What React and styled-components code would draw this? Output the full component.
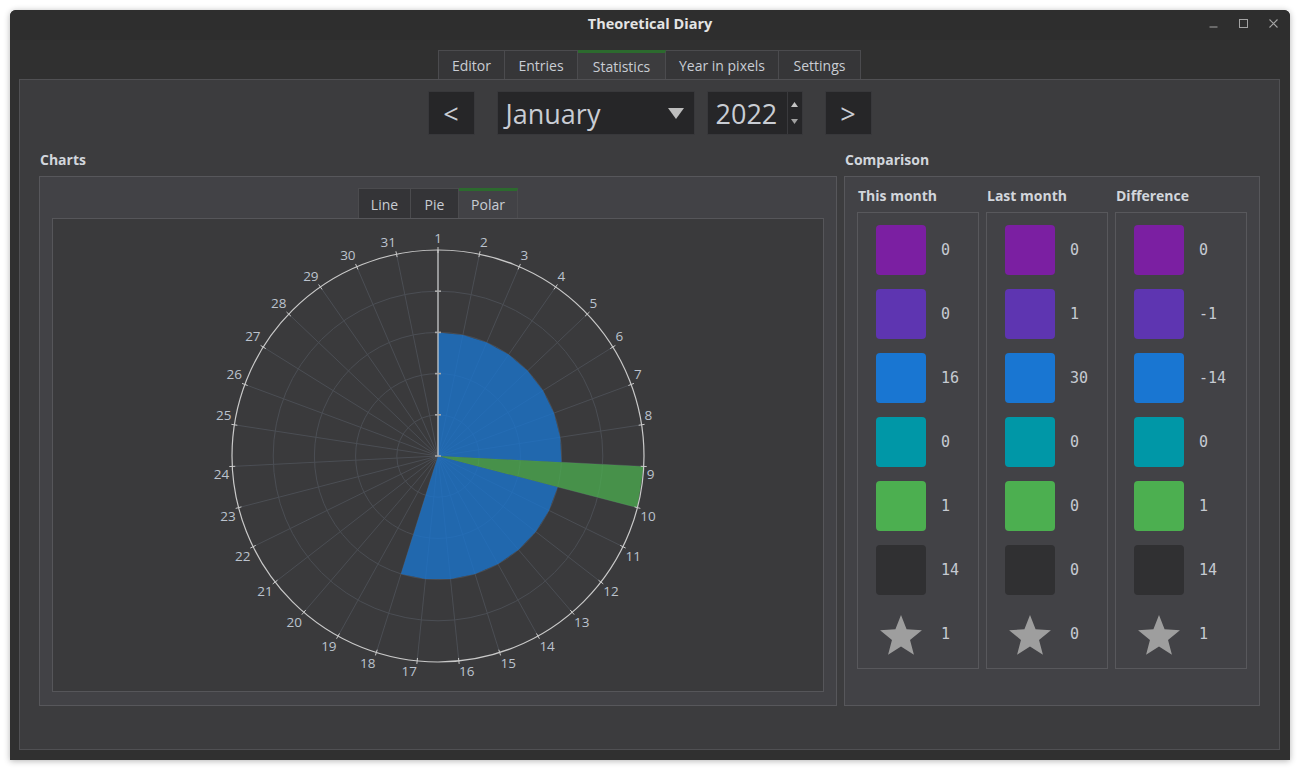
import React from 'react';
import styled, { createGlobalStyle } from 'styled-components';

const UI = `"Open Sans", "Noto Sans", sans-serif`;
const MONO = `"DejaVu Sans Mono", "Liberation Mono", monospace`;
const TEXT = '#c9cdd4';

const GlobalStyle = createGlobalStyle`
  html, body { margin: 0; padding: 0; background: #ffffff; }
  body { font-family: ${UI}; }
  * { box-sizing: border-box; }
`;

const Screen = styled.div`
  width: 1300px;
  height: 771px;
  padding: 10px 10px 11px 10px;
  background: #ffffff;
`;

const Window = styled.div`
  width: 1280px;
  height: 750px;
  background: #303030;
  border-radius: 6px 6px 0 0;
  box-shadow: 0 1px 6px rgba(0, 0, 0, 0.3);
  display: flex;
  flex-direction: column;
  overflow: hidden;
`;

const TitleBar = styled.div`
  height: 30px;
  flex-shrink: 0;
  display: grid;
  grid-template-columns: 1fr auto 1fr;
  align-items: center;
  padding-bottom: 3px;
  background: #2e2e2e;
`;

const Title = styled.div`
  grid-column: 2;
  font-weight: 700;
  font-size: 14.5px;
  color: #e4e4e4;
`;

const Controls = styled.div`
  grid-column: 3;
  justify-self: end;
  display: flex;
  gap: 21px;
  padding-right: 12px;
  align-items: center;
`;

const Body = styled.div`
  flex: 1;
  display: flex;
  flex-direction: column;
  padding: 10px 10px 10px 9px;
`;

const TabRow = styled.div`
  display: flex;
  justify-content: center;
  height: ${p => p.$h}px;
  flex-shrink: 0;
`;

const Tab = styled.div`
  width: ${p => p.$w}px;
  height: 100%;
  display: flex;
  align-items: center;
  justify-content: center;
  font-size: 14px;
  color: ${TEXT};
  background: ${p => (p.$active ? p.$activeBg : p.$bg)};
  border: 1px solid #4b4b4e;
  border-bottom: none;
  border-top: ${p => (p.$active ? '3px solid #2c6a2e' : '1px solid #4b4b4e')};
  padding-top: ${p => (p.$active ? '0' : '1px')};
  & + & { border-left: none; }
`;

const Pane = styled.div`
  flex: 1;
  background: #3c3c3e;
  border: 1px solid #505053;
  padding: 11px 0 0 0;
  display: flex;
  flex-direction: column;
`;

const NavRow = styled.div`
  display: flex;
  justify-content: center;
  gap: 12px;
  height: 44px;
`;

const DarkBox = styled.div`
  height: 44px;
  background: #262628;
  border: 1px solid #38383b;
  color: ${TEXT};
  font-size: 27px;
  display: flex;
  align-items: center;
`;

const NavButton = styled(DarkBox)`
  width: 47px;
  margin: 0 10px;
  justify-content: center;
`;

const Combo = styled(DarkBox)`
  width: 198px;
  padding: 0 10px 0 8px;
  justify-content: space-between;
`;

const Spin = styled(DarkBox)`
  width: 96px;
  padding-left: 8px;
  justify-content: space-between;
`;

const SpinArrows = styled.div`
  width: 15px;
  height: 100%;
  border-left: 1px solid #3a3a3d;
  display: flex;
  flex-direction: column;
  align-items: center;
  justify-content: space-around;
  padding: 4px 0;
`;

const Sections = styled.div`
  display: grid;
  grid-template-columns: 798px 416px;
  gap: 7px;
  padding-left: 19px;
  margin-top: 16px;
`;

const Section = styled.div`
  display: flex;
  flex-direction: column;
`;

const SectionLabel = styled.div`
  height: 18px;
  line-height: 18px;
  padding-left: 1px;
  margin-bottom: 7px;
  font-weight: 700;
  font-size: 14px;
  color: #d2d6dc;
`;

const GroupBox = styled.div`
  height: 530px;
  background: #424246;
  border: 1px solid #57575b;
  padding: ${p => p.$pad};
  display: flex;
  flex-direction: column;
`;

const ChartPane = styled.div`
  height: 474px;
  border: 1px solid #56565a;
  background: #3a3a3c;
`;

const CompareGrid = styled.div`
  display: grid;
  grid-template-columns: 122px 122px 1fr;
  gap: 7px;
`;

const CompareColumn = styled.div`
  display: flex;
  flex-direction: column;
`;

const ColumnHeader = styled.div`
  height: 18px;
  line-height: 18px;
  padding-left: 1px;
  margin-bottom: 7px;
  font-weight: 700;
  font-size: 14px;
  color: #d2d6dc;
`;

const ColumnBox = styled.div`
  height: 457px;
  border: 1px solid #58585c;
  padding: 12px 0 0 18px;
  display: flex;
  flex-direction: column;
  gap: 14px;
`;

const StatRow = styled.div`
  height: 50px;
  display: flex;
  align-items: center;
  gap: 15px;
`;

const Swatch = styled.div`
  width: 50px;
  height: 50px;
  border-radius: 4px;
  background: ${p => p.$color};
`;

const StarBox = styled.div`
  width: 50px;
  height: 50px;
  display: flex;
  justify-content: center;
  align-items: center;
`;

const Num = styled.span`
  font-family: ${MONO};
  font-size: 15px;
  color: #c6cad2;
`;

const MOODS = ['#7b1fa2', '#5e35b1', '#1976d2', '#0097a7', '#4caf50', '#303032'];

const COLUMNS = [
  { title: 'This month', values: ['0', '0', '16', '0', '1', '14', '1'] },
  { title: 'Last month', values: ['0', '1', '30', '0', '0', '0', '0'] },
  { title: 'Difference', values: ['0', '-1', '-14', '0', '1', '14', '1'] },
];

function Star() {
  const R = 22;
  const r = 9.5;
  const cx = 21;
  const cy = 22;
  const pts = [];
  for (let i = 0; i < 10; i++) {
    const rad = i % 2 === 0 ? R : r;
    const a = (Math.PI / 5) * i;
    pts.push(`${(cx + rad * Math.sin(a)).toFixed(2)},${(cy - rad * Math.cos(a)).toFixed(2)}`);
  }
  return (
    <svg width="42" height="41" viewBox="0 0 42 41" style={{ marginTop: 2 }}>
      <polygon points={pts.join(' ')} fill="#9e9e9e" />
    </svg>
  );
}

function PolarChart() {
  const W = 770;
  const H = 472;
  const cx = 385;
  const cy = 237;
  const R = 206;
  const N = 31;
  const ang = d => ((d - 1) * 360) / N;
  const pt = (deg, rad) => {
    const a = (deg * Math.PI) / 180;
    return [cx + rad * Math.sin(a), cy - rad * Math.cos(a)];
  };
  const days = Array.from({ length: N }, (_, i) => i + 1);
  const grid = '#4b4e54';
  const blueR = (R * 3) / 5;

  const poly = (from, to, rad) => {
    const p = [[cx, cy]];
    for (let d = from; d <= to; d++) p.push(pt(ang(d), rad));
    return p.map(q => q.map(v => v.toFixed(2)).join(',')).join(' ');
  };

  const labels = days.map(d => {
    const a = ang(d);
    const [px, py] = pt(a, R + 3);
    let anchor = 'start';
    let y = py - 4;
    if (a === 0) {
      anchor = 'middle';
    } else if (a < 90) {
      anchor = 'start';
      y = py - 4;
    } else if (a < 180) {
      anchor = 'start';
      y = py + 12.5;
    } else if (a < 270) {
      anchor = 'end';
      y = py + 12.5;
    } else {
      anchor = 'end';
      y = py - 4;
    }
    return (
      <text key={d} x={px.toFixed(1)} y={y.toFixed(1)} textAnchor={anchor} fontSize="13.5" fill="#bcc3ce" fontFamily={UI}>
        {d}
      </text>
    );
  });

  return (
    <svg width={W} height={H} viewBox={`0 0 ${W} ${H}`} style={{ display: 'block' }}>
      {[1, 2, 3, 4].map(k => (
        <circle key={k} cx={cx} cy={cy} r={(R * k) / 5} fill="none" stroke={grid} strokeWidth="1" />
      ))}
      {days.map(d => {
        const [x, y] = pt(ang(d), R);
        return <line key={d} x1={cx} y1={cy} x2={x} y2={y} stroke={grid} strokeWidth="1" />;
      })}
      <polygon points={poly(1, 9, blueR)} fill="#1976d2" fillOpacity="0.76" />
      <polygon points={poly(10, 18, blueR)} fill="#1976d2" fillOpacity="0.76" />
      <polygon points={poly(9, 10, R)} fill="#4caf50" fillOpacity="0.74" />
      <circle cx={cx} cy={cy} r={R} fill="none" stroke="#c9c9c9" strokeWidth="1.2" />
      {days.map(d => {
        const [x1, y1] = pt(ang(d), R - 3);
        const [x2, y2] = pt(ang(d), R + 3);
        return <line key={d} x1={x1} y1={y1} x2={x2} y2={y2} stroke="#c9c9c9" strokeWidth="1" />;
      })}
      <line x1={cx} y1={cy} x2={cx} y2={cy - R} stroke="#cfcfcf" strokeWidth="1.2" />
      {[0, 1, 2, 3, 4].map(k => (
        <line key={k} x1={cx - 3} y1={cy - (R * k) / 5} x2={cx + 3} y2={cy - (R * k) / 5} stroke="#a8a8a8" strokeWidth="1.6" />
      ))}
      {labels}
    </svg>
  );
}

const MAIN_TABS = [
  ['Editor', 67],
  ['Entries', 73],
  ['Statistics', 88],
  ['Year in pixels', 113],
  ['Settings', 82],
];

const CHART_TABS = [
  ['Line', 53],
  ['Pie', 48],
  ['Polar', 59],
];

export default function App() {
  return (
    <Screen>
      <GlobalStyle />
      <Window>
        <TitleBar>
          <Title>Theoretical Diary</Title>
          <Controls>
            <svg width="9" height="9" viewBox="0 0 9 9">
              <line x1="0.5" y1="8" x2="8.5" y2="8" stroke="#a3a3a3" strokeWidth="1.2" />
            </svg>
            <svg width="9" height="9" viewBox="0 0 9 9">
              <rect x="0.5" y="0.5" width="8" height="8" fill="none" stroke="#a3a3a3" strokeWidth="1" />
            </svg>
            <svg width="9" height="9" viewBox="0 0 9 9">
              <path d="M0.5 0.5 L8.5 8.5 M8.5 0.5 L0.5 8.5" stroke="#a3a3a3" strokeWidth="1.1" />
            </svg>
          </Controls>
        </TitleBar>
        <Body>
          <TabRow $h={29}>
            {MAIN_TABS.map(([t, w]) => (
              <Tab key={t} $w={w} $active={t === 'Statistics'} $bg="#363638" $activeBg="#3c3c3e">
                {t}
              </Tab>
            ))}
          </TabRow>
          <Pane>
            <NavRow>
              <NavButton>&lt;</NavButton>
              <Combo>
                <span>January</span>
                <svg width="16" height="11" viewBox="0 0 16 11">
                  <polygon points="0,0 16,0 8,11" fill="#bdbdbd" />
                </svg>
              </Combo>
              <Spin>
                <span>2022</span>
                <SpinArrows>
                  <svg width="7" height="5" viewBox="0 0 7 5">
                    <polygon points="0,5 7,5 3.5,0" fill="#c4c4c4" />
                  </svg>
                  <svg width="7" height="5" viewBox="0 0 7 5">
                    <polygon points="0,0 7,0 3.5,5" fill="#a0a0a0" />
                  </svg>
                </SpinArrows>
              </Spin>
              <NavButton>&gt;</NavButton>
            </NavRow>
            <Sections>
              <Section>
                <SectionLabel>Charts</SectionLabel>
                <GroupBox $pad="11px 12px 13px 12px">
                  <TabRow $h={30}>
                    {CHART_TABS.map(([t, w]) => (
                      <Tab key={t} $w={w} $active={t === 'Polar'} $bg="#343437" $activeBg="#424246">
                        {t}
                      </Tab>
                    ))}
                  </TabRow>
                  <ChartPane>
                    <PolarChart />
                  </ChartPane>
                </GroupBox>
              </Section>
              <Section>
                <SectionLabel>Comparison</SectionLabel>
                <GroupBox $pad="10px 12px 0 12px">
                  <CompareGrid>
                    {COLUMNS.map(col => (
                      <CompareColumn key={col.title}>
                        <ColumnHeader>{col.title}</ColumnHeader>
                        <ColumnBox>
                          {MOODS.map((c, i) => (
                            <StatRow key={c}>
                              <Swatch $color={c} />
                              <Num>{col.values[i]}</Num>
                            </StatRow>
                          ))}
                          <StatRow>
                            <StarBox>
                              <Star />
                            </StarBox>
                            <Num>{col.values[6]}</Num>
                          </StatRow>
                        </ColumnBox>
                      </CompareColumn>
                    ))}
                  </CompareGrid>
                </GroupBox>
              </Section>
            </Sections>
          </Pane>
        </Body>
      </Window>
    </Screen>
  );
}
